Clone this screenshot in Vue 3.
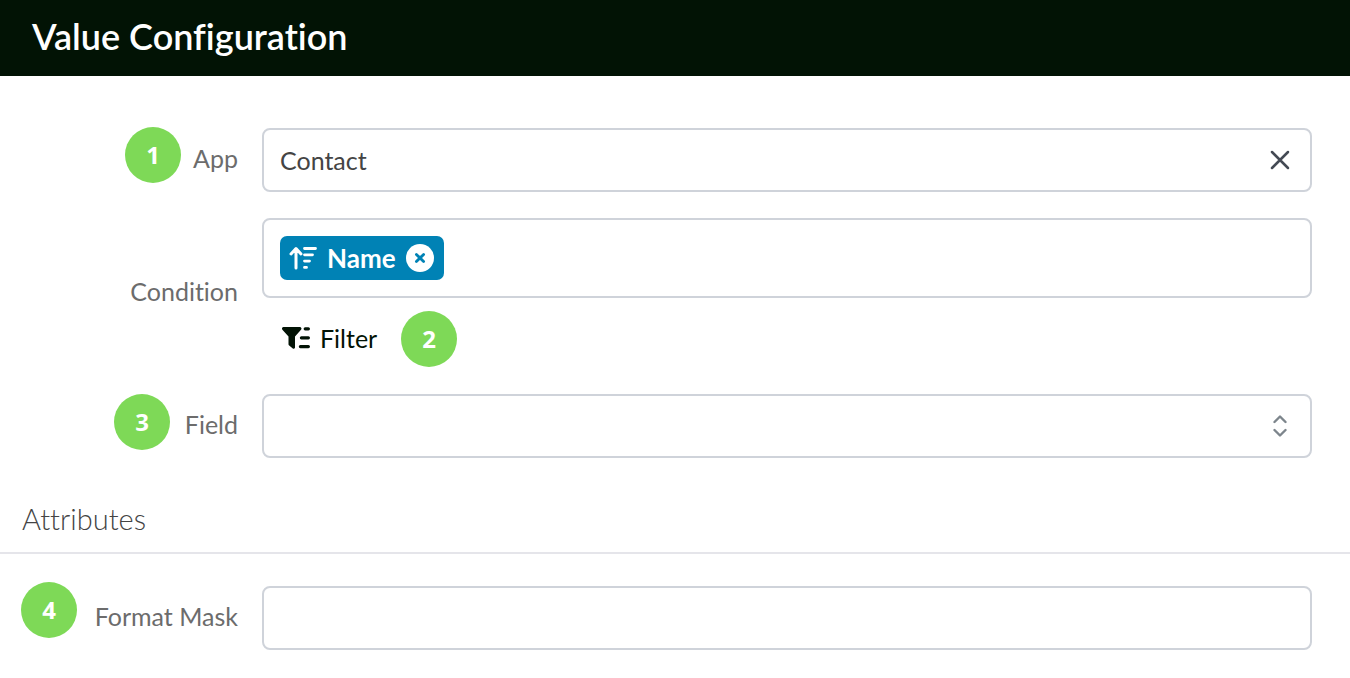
<script setup>
import { ref } from 'vue'

const app = ref('Contact')
const field = ref('')
const mask = ref('')
const conditions = ref(['Name'])

function removeCondition(index) {
  conditions.value.splice(index, 1)
}
</script>

<template>
  <div class="dialog">
    <header class="header">
      <h1>Value Configuration</h1>
    </header>

    <form class="form" @submit.prevent>
      <div class="row">
        <div class="caption">
          <span class="badge pin pin-app">1</span>
          <label for="app">App</label>
        </div>
        <div class="control">
          <input id="app" v-model="app" class="box" type="text" />
          <button class="clear" type="button" aria-label="Clear app" @click="app = ''">
            <svg width="20" height="20" viewBox="0 0 20 20" fill="none" stroke="#444a54" stroke-width="2.5" stroke-linecap="round">
              <path d="M2 2l16 16M18 2L2 18" />
            </svg>
          </button>
        </div>
      </div>

      <div class="row">
        <div class="caption">
          <span id="condition-label" class="label">Condition</span>
        </div>
        <div class="stack">
          <div class="box tags" role="group" aria-labelledby="condition-label">
            <span v-for="(name, i) in conditions" :key="name" class="tag">
              <svg width="28" height="24" viewBox="0 0 28 24" fill="none" stroke="#fff" stroke-linecap="round" stroke-linejoin="round">
                <path stroke-width="3" d="M7 22V3M2 8l5-5.500 5 5.500" />
                <path stroke-width="2.8" d="M15.5 2.5h11M15.5 8.8h8M15.5 15.1h5M15.5 21.4h2" />
              </svg>
              <span>{{ name }}</span>
              <button class="remove" type="button" :aria-label="'Remove ' + name" @click="removeCondition(i)">
                <svg width="28" height="28" viewBox="0 0 28 28">
                  <circle cx="14" cy="14" r="14" fill="#fff" />
                  <path d="M10.4 10.4l7.2 7.2M17.6 10.4l-7.2 7.2" stroke="#0082b5" stroke-width="2.8" stroke-linecap="round" />
                </svg>
              </button>
            </span>
          </div>
          <div class="actions">
            <button class="filter" type="button">
              <svg width="28" height="22" viewBox="0 0 28 22">
                <path fill="#021305" d="M1.6 0H17.8a1.6 1.6 0 0 1 1.2 2.7L13 9.6V20.4a1.4 1.4 0 0 1-2.2 1.1L7.2 18.6a1.8 1.8 0 0 1-.7-1.4V9.6L.4 2.7A1.6 1.6 0 0 1 1.6 0Z" />
                <path stroke="#021305" stroke-width="3.2" stroke-linecap="round" d="M23.2 1.8h3.2M19.4 10.8h7M18.4 19.6h8" />
              </svg>
              <span>Filter</span>
            </button>
            <span class="badge">2</span>
          </div>
        </div>
      </div>

      <div class="row">
        <div class="caption">
          <span class="badge pin pin-field">3</span>
          <label for="field">Field</label>
        </div>
        <div class="control">
          <select id="field" v-model="field" class="box">
            <option value=""></option>
          </select>
          <svg class="chevrons" width="14" height="22" viewBox="0 0 14 22" fill="none" stroke="#7d858c" stroke-width="2.4" stroke-linecap="round" stroke-linejoin="round">
            <path d="M1.5 7L7 1.5 12.5 7M1.5 15L7 20.5 12.5 15" />
          </svg>
        </div>
      </div>

      <h2>Attributes</h2>

      <div class="row">
        <div class="caption">
          <span class="badge pin pin-mask">4</span>
          <label for="mask">Format Mask</label>
        </div>
        <div class="control">
          <input id="mask" v-model="mask" class="box" type="text" />
        </div>
      </div>
    </form>
  </div>
</template>

<style>
body {
  margin: 0;
  background: #fff;
}
</style>

<style scoped>
.dialog,
.dialog input,
.dialog select,
.dialog button {
  font-family: Lato, "Liberation Sans", sans-serif;
  font-size: 25px;
  font-variant-ligatures: none;
  line-height: 32px;
}

.dialog * {
  box-sizing: border-box;
}

.header {
  padding: 14px 32px 18px;
  background: #021305;
  color: #fff;
}

h1 {
  margin: 0;
  font-family: "Lato Semibold", "Lato Medium", Lato, "Liberation Sans", sans-serif;
  font-size: 36px;
  font-weight: 600;
  line-height: 44px;
}

.form {
  display: flex;
  flex-direction: column;
  gap: 26px;
  padding: 52px 0 28px;
}

.row {
  display: grid;
  grid-template-columns: 238px 1fr;
  column-gap: 24px;
  padding-right: 38px;
}

.caption {
  position: relative;
  display: flex;
  align-items: center;
  justify-content: flex-end;
  padding-bottom: 4px;
  color: #6c6c6c;
}

.control {
  position: relative;
  display: flex;
}

.stack {
  display: flex;
  flex-direction: column;
  gap: 12px;
}

.box {
  width: 100%;
  height: 64px;
  margin: 0;
  padding: 0 16px;
  border: 2px solid #cfd3da;
  border-radius: 8px;
  background: #fff;
  color: #444;
  outline: none;
  appearance: none;
}

.tags {
  display: flex;
  align-items: center;
  gap: 8px;
  height: 80px;
}

.tag {
  display: flex;
  align-items: center;
  gap: 10px;
  height: 44px;
  padding: 0 10px 0 9px;
  border-radius: 7px;
  background: #0082b5;
  color: #fff;
  font-size: 26px;
  font-weight: 700;
}

button {
  display: flex;
  align-items: center;
  margin: 0;
  padding: 0;
  border: 0;
  background: none;
  cursor: pointer;
}

.clear {
  position: absolute;
  top: 0;
  right: 22px;
  height: 100%;
}

.chevrons {
  position: absolute;
  top: 21px;
  right: 25px;
  pointer-events: none;
}

.actions {
  display: flex;
  align-items: center;
  gap: 24px;
  height: 58px;
  padding-left: 20px;
}

.dialog .filter {
  gap: 10px;
  padding-bottom: 2px;
  color: #021305;
}

.badge {
  display: flex;
  align-items: center;
  justify-content: center;
  width: 56px;
  height: 56px;
  border-radius: 50%;
  background: #7ed957;
  color: #fff;
  font-family: "Open Sans", "Noto Sans", sans-serif;
  font-size: 24px;
  font-weight: 700;
}

.pin {
  position: absolute;
}

.pin-app {
  top: -1px;
  right: 57px;
}

.pin-field {
  top: 0;
  right: 68px;
}

.pin-mask {
  top: -4px;
  right: 161px;
}

h2 {
  margin: 0 0 6px;
  padding: 18px 22px 16px;
  border-bottom: 2px solid #e5e5ea;
  color: #444;
  font-size: 29px;
  font-weight: 300;
  line-height: 34px;
}
</style>
